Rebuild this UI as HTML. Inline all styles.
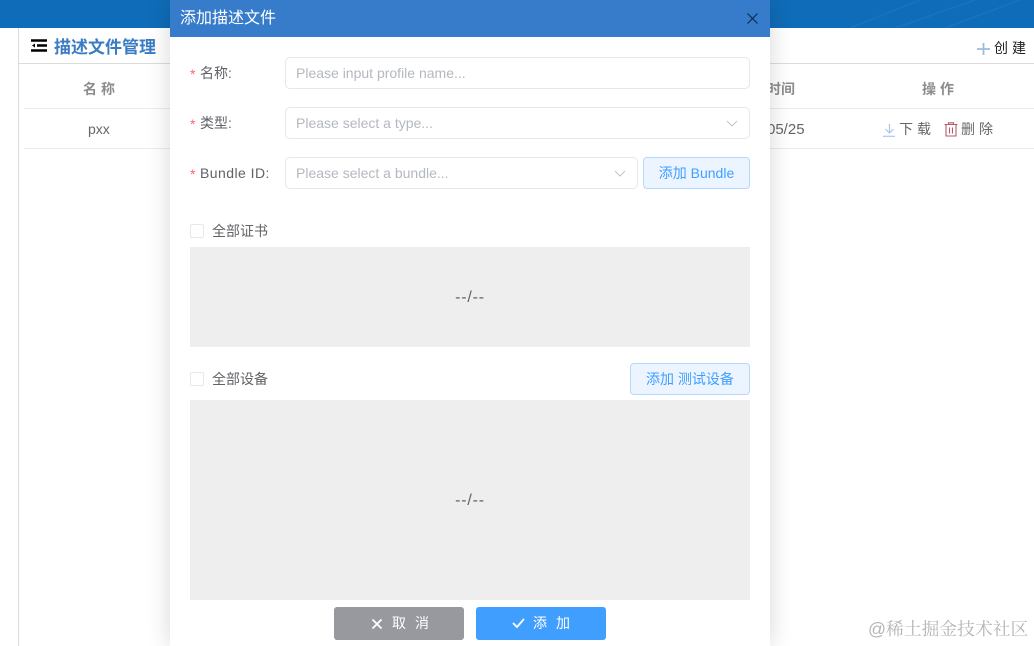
<!DOCTYPE html>
<html><head><meta charset="utf-8"><style>
html,body{margin:0;padding:0}
body{width:1034px;height:646px;overflow:hidden;position:relative;background:#fff;font-family:"Liberation Sans","Noto Sans CJK SC",sans-serif;color:#606266}
div,span{position:absolute;box-sizing:border-box;white-space:nowrap}
svg{position:absolute;overflow:visible}
.lbl{font-size:14px;line-height:20px;color:#606266}
.req{color:#f56c6c;font-size:14px;line-height:20px}
.inp{background:#fff;border:1px solid #e4e7ec;border-radius:5px;height:32px;font-size:14px;line-height:31px;color:#b4b8c0;padding-left:10px}
.btn{background:#ecf5ff;border:1px solid #b3d8ff;border-radius:4px;color:#409eff;font-size:14px;text-align:center}
.cb{width:14px;height:14px;border:1px solid #e6e8eb;border-radius:2px;background:#fff}
.gray{background:#eee;left:20px;width:560px}
.dash{font-size:16px;letter-spacing:.8px;color:#606266;left:0;width:100%;text-align:center;line-height:20px}
</style></head><body>
<div style="left:0;top:0;width:1034px;height:28px;background:#0f6cb8"></div>
<svg style="left:770px;top:0" width="264" height="28"><path d="M80 28L150 0M125 28L205 0M175 28L250 0" stroke="#fff" stroke-opacity=".05" stroke-width="1.5" fill="none"/></svg>
<div style="left:18px;top:28px;width:1px;height:618px;background:#dcdcdc"></div>
<div style="left:19px;top:63px;width:1015px;height:1px;background:#dcdcdc"></div>
<div style="left:24px;top:108px;width:1010px;height:1px;background:#ebebeb"></div>
<div style="left:24px;top:148px;width:1010px;height:1px;background:#ebebeb"></div>
<svg style="left:31px;top:39px" width="16" height="13"><path d="M0 1.5H16M6 6.5H16M0 11.5H16" stroke="#000" stroke-width="2.4"/><path d="M4 4.5L1 6.5L4 8.5Z" fill="#000"/></svg>
<div style="left:54px;top:36px;font-size:17px;line-height:24px;font-weight:bold;color:#3a7cc4">描述文件管理</div>
<div style="left:83px;top:79px;font-size:14px;line-height:20px;font-weight:bold;color:#8c8c8c;letter-spacing:4px">名称</div>
<div style="left:88px;top:119px;font-size:14px;line-height:20px;color:#666">pxx</div>
<div style="left:767px;top:79px;font-size:14px;line-height:20px;font-weight:bold;color:#8c8c8c">时间</div>
<div style="left:922px;top:79px;font-size:14px;line-height:20px;font-weight:bold;color:#8c8c8c;letter-spacing:4px">操作</div>
<div style="left:767px;top:120px;font-size:15px;line-height:20px;color:#666">05/25</div>
<svg style="left:977px;top:43px" width="13" height="12"><path d="M6.5 0V12M0 6H13" stroke="#9dbcdc" stroke-width="1.8"/></svg>
<div style="left:994px;top:38px;font-size:14px;line-height:20px;color:#222;letter-spacing:4px">创建</div>
<svg style="left:883px;top:124px" width="13" height="13"><path d="M6.5 0V8.5M2.5 5L6.5 9L10.5 5" stroke="#a5c8ea" stroke-width="1.2" fill="none"/><path d="M0 12.3H12" stroke="#a5c8ea" stroke-width="1.2"/></svg>
<div style="left:899px;top:119px;font-size:14px;line-height:20px;color:#666;letter-spacing:4px">下载</div>
<svg style="left:944px;top:122px" width="14" height="15"><path d="M0.5 2.5H13.5M4.5 2.5V0.8H9.5V2.5M2 2.5V14H12V2.5M5.5 5.5V11.5M8.5 5.5V11.5" stroke="#b5596b" stroke-width="1.1" fill="none"/></svg>
<div style="left:961px;top:119px;font-size:14px;line-height:20px;color:#666;letter-spacing:4px">删除</div>
<div style="left:868px;top:617px;font-size:17.8px;line-height:24px;color:#b5b5b5;font-family:'Liberation Sans','Noto Serif CJK SC',serif">@稀土掘金技术社区</div>

<div style="left:170px;top:0;width:600px;height:646px;background:#fff;box-shadow:0 0 22px rgba(0,0,0,.16)">
  <div style="left:0;top:0;width:600px;height:37px;background:#367cca"></div>
  <div style="left:10px;top:8px;font-size:16px;line-height:22px;color:#fff">添加描述文件</div>
  <svg style="left:577px;top:13px" width="11" height="11"><path d="M0.5 0.5L10.5 10.5M10.5 0.5L0.5 10.5" stroke="#0e2a4d" stroke-width="1.2"/></svg>

  <span class="req" style="left:20px;top:64px">*</span><span class="lbl" style="left:30px;top:63px">名称:</span>
  <div class="inp" style="left:115px;top:57px;width:465px">Please input profile name...</div>
  <span class="req" style="left:20px;top:114px">*</span><span class="lbl" style="left:30px;top:113px">类型:</span>
  <div class="inp" style="left:115px;top:107px;width:465px">Please select a type...</div>
  <svg style="left:556px;top:120px" width="12" height="7"><path d="M1 1L6 6L11 1" stroke="#c0c4cc" fill="none"/></svg>
  <span class="req" style="left:20px;top:164px">*</span><span class="lbl" style="left:30px;top:163px;letter-spacing:.45px">Bundle ID:</span>
  <div class="inp" style="left:115px;top:157px;width:353px">Please select a bundle...</div>
  <svg style="left:444px;top:170px" width="12" height="7"><path d="M1 1L6 6L11 1" stroke="#c0c4cc" fill="none"/></svg>
  <div class="btn" style="left:473px;top:157px;width:107px;height:32px;line-height:31px">添加 Bundle</div>

  <div class="cb" style="left:20px;top:224px"></div>
  <span class="lbl" style="left:42px;top:221px">全部证书</span>
  <div class="gray" style="top:247px;height:100px"><div class="dash" style="top:41px">--/--</div></div>

  <div class="cb" style="left:20px;top:372px"></div>
  <span class="lbl" style="left:42px;top:369px">全部设备</span>
  <div class="btn" style="left:460px;top:363px;width:120px;height:32px;line-height:31px">添加 测试设备</div>
  <div class="gray" style="top:400px;height:200px"><div class="dash" style="top:91px">--/--</div></div>

  <div style="left:164px;top:607px;width:130px;height:33px;background:#97999e;border-radius:3px"></div>
  <svg style="left:202px;top:619px" width="10" height="10"><path d="M0.5 0.5L9.5 9.5M9.5 0.5L0.5 9.5" stroke="#fff" stroke-width="1.8"/></svg>
  <div style="left:222px;top:613px;font-size:14px;line-height:20px;color:#fff;letter-spacing:9px">取消</div>
  <div style="left:306px;top:607px;width:130px;height:33px;background:#409eff;border-radius:3px"></div>
  <svg style="left:342px;top:618px" width="13" height="10"><path d="M1 5L5 9L12 1" stroke="#fff" stroke-width="1.8" fill="none"/></svg>
  <div style="left:363px;top:613px;font-size:14px;line-height:20px;color:#fff;letter-spacing:9px">添加</div>
</div>
</body></html>
